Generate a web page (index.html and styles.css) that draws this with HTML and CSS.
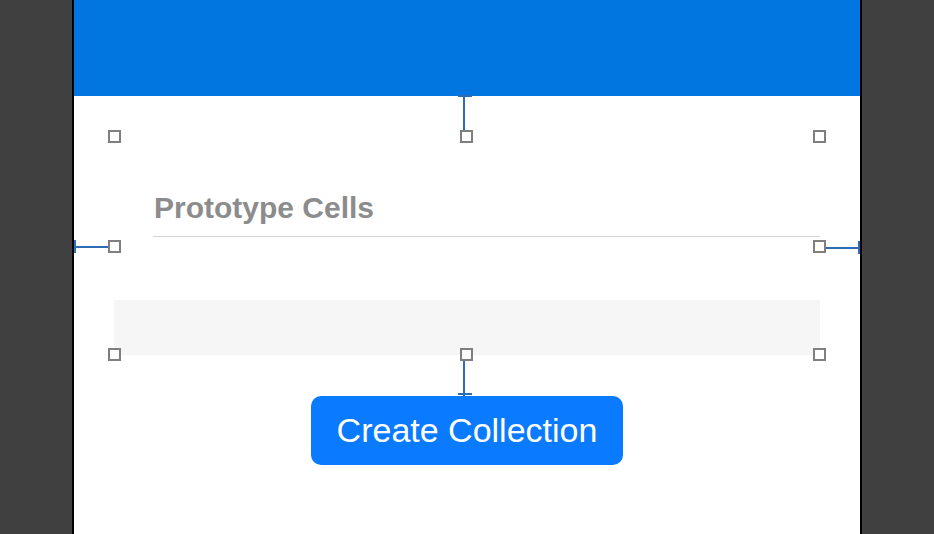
FILE: index.html
```html
<!DOCTYPE html>
<html lang="en">
<head>
<meta charset="utf-8">
<title>Prototype Cells</title>
<link rel="stylesheet" href="styles.css">
</head>
<body>
<div class="stage">
  <div class="device">
    <div class="navbar"></div>
    <div class="stack-wrap">
      <div class="stack">
        <div class="header-cell">
          <div class="title">Prototype Cells</div>
        </div>
        <div class="band"></div>

        <span class="cline cline-top"></span>
        <span class="cline cline-left"></span>
        <span class="cline cline-right"></span>
        <span class="cline cline-bottom"></span>

        <span class="handle h-tl"></span>
        <span class="handle h-tc"></span>
        <span class="handle h-tr"></span>
        <span class="handle h-ml"></span>
        <span class="handle h-mr"></span>
        <span class="handle h-bl"></span>
        <span class="handle h-bc"></span>
        <span class="handle h-br"></span>
      </div>
    </div>
    <div class="button-row">
      <button class="create-btn">Create Collection</button>
    </div>
  </div>
</div>
</body>
</html>
```

FILE: styles.css
```css
* { box-sizing: border-box; }

html, body {
  margin: 0;
  padding: 0;
  height: 100%;
}

body {
  background: #404040;
  font-family: "Liberation Sans", Arial, sans-serif;
  overflow: hidden;
}

.stage {
  display: flex;
  justify-content: center;
  height: 534px;
}

.device {
  width: 790px;
  height: 100%;
  background: #ffffff;
  border-left: 2px solid #000;
  border-right: 2px solid #000;
  display: flex;
  flex-direction: column;
}

.navbar {
  height: 96px;
  background: #0276e0;
  flex: none;
}

.stack-wrap {
  padding: 40px 40px 0 40px;
}

.stack {
  position: relative;
  height: 219px;
  display: flex;
  flex-direction: column;
}

.header-cell {
  margin-left: 39px;
  padding-top: 54px;
  padding-bottom: 10px;
  border-bottom: 1px solid #d4d4d4;
}

.title {
  font-size: 30px;
  line-height: 36px;
  font-weight: 700;
  color: #8c8c8c;
  padding-left: 1px;
}

.band {
  margin-top: 63px;
  height: 55px;
  background: #f6f6f6;
}

/* constraint lines */
.cline {
  position: absolute;
  background: #2e6db4;
}
.cline::after {
  content: "";
  position: absolute;
  background: #2e6db4;
}
.cline-top {
  top: -40px;
  height: 34px;
  width: 2px;
  left: calc(50% - 4px);
}
.cline-top::after {
  top: -1px;
  left: -5px;
  width: 14px;
  height: 2px;
}
.cline-bottom {
  bottom: -41px;
  height: 35px;
  width: 2px;
  left: calc(50% - 4px);
}
.cline-bottom::after {
  bottom: 1px;
  left: -5px;
  width: 14px;
  height: 2px;
}
.cline-left {
  left: -40px;
  width: 34px;
  height: 2px;
  top: calc(50% + 0px);
}
.cline-left::after {
  left: 0;
  top: -6px;
  width: 2px;
  height: 13px;
}
.cline-right {
  right: -40px;
  width: 34px;
  height: 2px;
  top: calc(50% + 1px);
}
.cline-right::after {
  right: 0;
  top: -6px;
  width: 2px;
  height: 13px;
}

/* selection handles */
.handle {
  position: absolute;
  width: 13px;
  height: 13px;
  border: 2px solid #7f7f7f;
  background: #ffffff;
}
.h-tl { left: -6px; top: -6px; }
.h-tc { left: calc(50% - 7px); top: -6px; }
.h-tr { right: -6px; top: -6px; }
.h-ml { left: -6px; top: calc(50% - 6px); }
.h-mr { right: -6px; top: calc(50% - 6px); }
.h-bl { left: -6px; bottom: -6px; }
.h-bc { left: calc(50% - 7px); bottom: -6px; }
.h-br { right: -6px; bottom: -6px; }

.button-row {
  margin-top: 41px;
  display: flex;
  justify-content: center;
}

.create-btn {
  width: 312px;
  height: 69px;
  border: none;
  border-radius: 10px;
  background: #0a7aff;
  color: #ffffff;
  font-family: "Liberation Sans", Arial, sans-serif;
  font-size: 34px;
  line-height: 69px;
  padding: 0;
  cursor: pointer;
}
```
